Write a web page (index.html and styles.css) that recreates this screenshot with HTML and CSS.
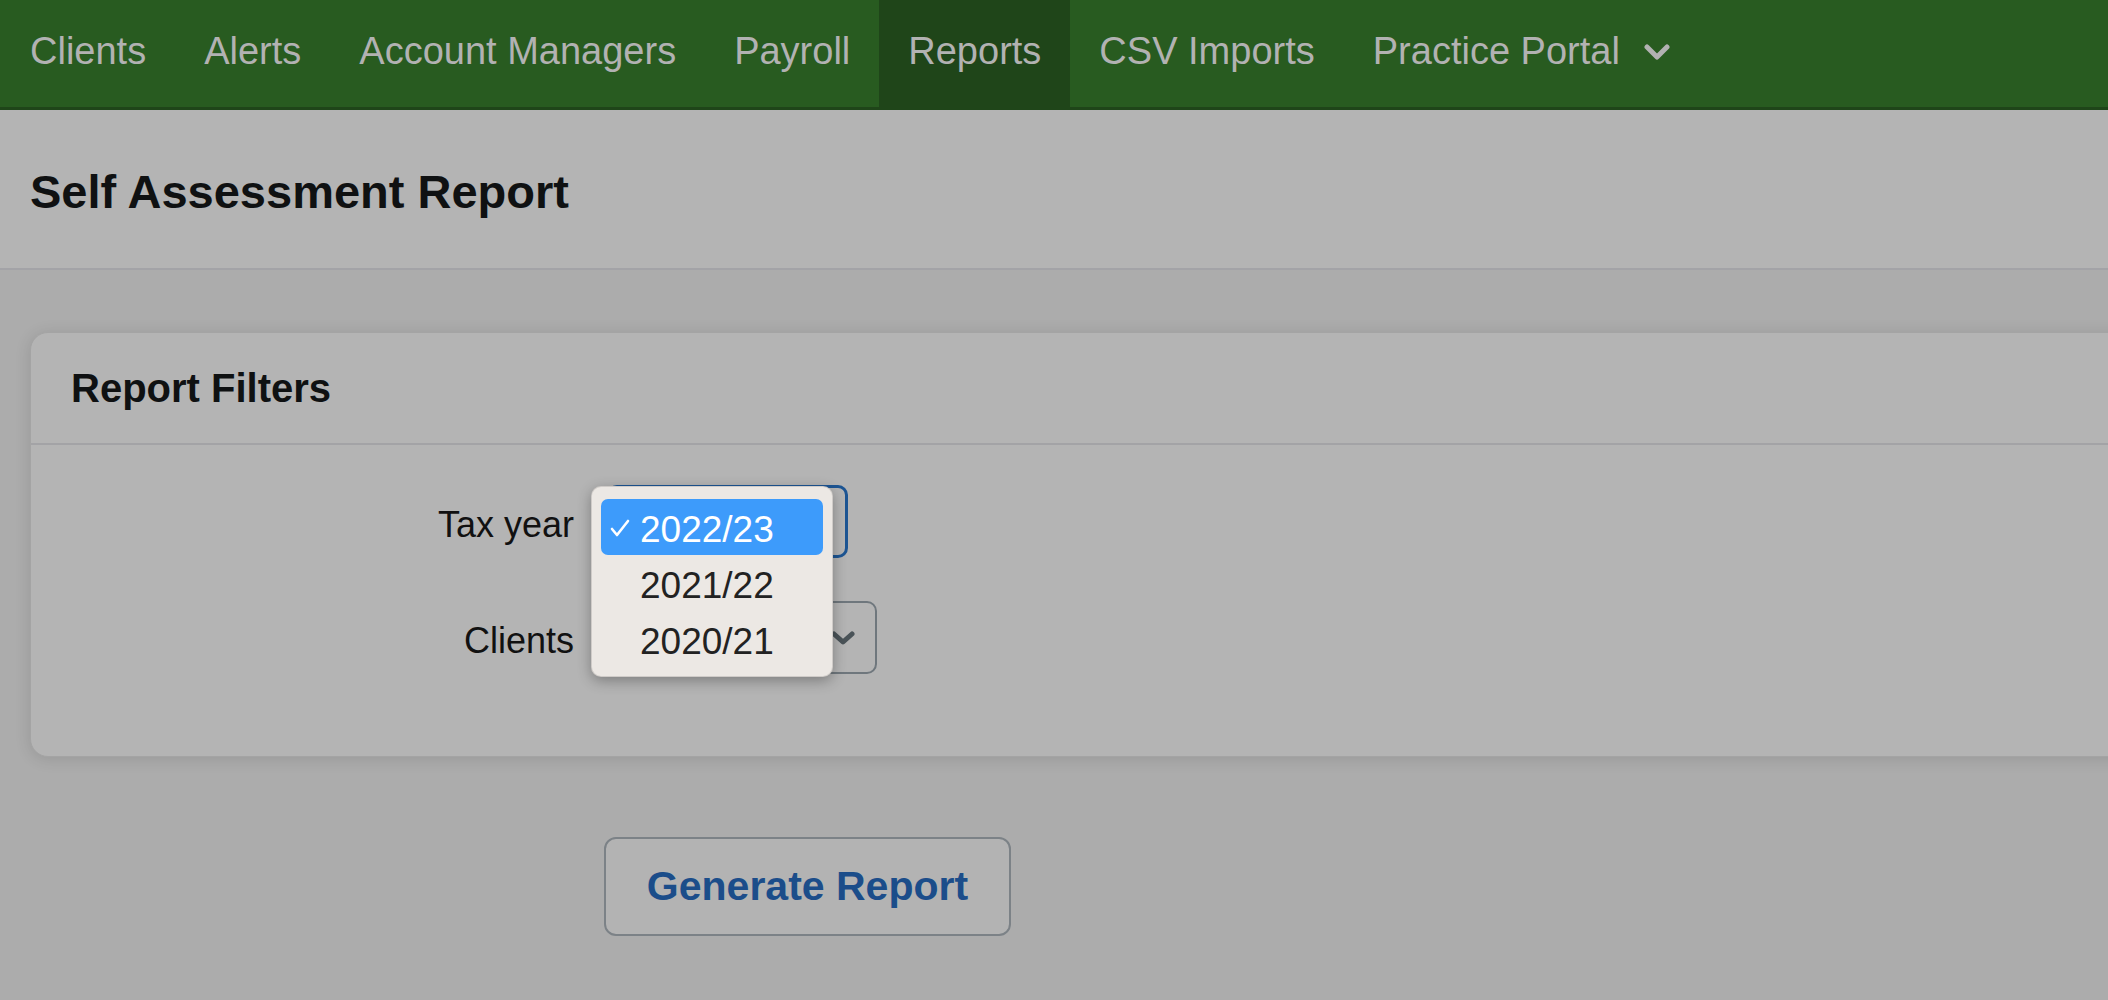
FILE: index.html
```html
<!DOCTYPE html>
<html lang="en">
<head>
  <meta charset="UTF-8">
  <title>Self Assessment Report</title>
  <link rel="stylesheet" href="styles.css">
</head>
<body>
  <nav class="topnav">
    <a class="nav-item">Clients</a>
    <a class="nav-item">Alerts</a>
    <a class="nav-item">Account Managers</a>
    <a class="nav-item">Payroll</a>
    <a class="nav-item active">Reports</a>
    <a class="nav-item">CSV Imports</a>
    <a class="nav-item">Practice Portal
      <svg class="nav-caret" width="26" height="16" viewBox="0 0 26 16">
        <polyline points="3,3 13,13 23,3" fill="none" stroke="currentColor" stroke-width="5" stroke-linecap="round" stroke-linejoin="round"/>
      </svg>
    </a>
  </nav>

  <header class="page-header">
    <h1>Self Assessment Report</h1>
  </header>

  <main class="page-body">
    <section class="card">
      <div class="card-header">
        <h2>Report Filters</h2>
      </div>
      <div class="card-body">
        <div class="form-row">
          <label>Tax year</label>
          <div class="select-wrap">
            <div class="select focused"></div>
            <ul class="popup">
              <li class="selected">
                <svg class="check" width="20" height="18" viewBox="0 0 20 18">
                  <polyline points="2,10 7,16 18,2" fill="none" stroke="#fff" stroke-width="2.6" stroke-linecap="round" stroke-linejoin="round"/>
                </svg>
                2022/23
              </li>
              <li>2021/22</li>
              <li>2020/21</li>
            </ul>
          </div>
        </div>
        <div class="form-row">
          <label>Clients</label>
          <div class="select-wrap">
            <div class="select clients">
              <svg class="sel-caret" width="24" height="14" viewBox="0 0 24 14">
                <polyline points="3,3 12,11 21,3" fill="none" stroke="currentColor" stroke-width="5" stroke-linecap="round" stroke-linejoin="round"/>
              </svg>
            </div>
          </div>
        </div>
      </div>
    </section>

    <button class="generate-btn">Generate Report</button>
  </main>
</body>
</html>
```

FILE: styles.css
```css
* {
  box-sizing: border-box;
}
html, body {
  overflow: hidden;
}
body {
  margin: 0;
  font-family: 'Liberation Sans', Arial, sans-serif;
  background-color: #acacac;
  color: #111;
}

/* top navigation */
.topnav {
  display: flex;
  height: 110px;
  background-color: #285b20;
  border-bottom: 3px solid #1f4519;
}
.nav-item {
  display: flex;
  align-items: center;
  padding: 0 29px 5px;
  font-size: 38px;
  color: #b2b2b2;
  cursor: pointer;
}
.nav-item:first-child {
  padding-left: 30px;
}
.nav-item.active {
  background-color: #1f4519;
}
.nav-caret {
  margin-left: 24px;
  margin-top: 2px;
}

/* page header */
.page-header {
  height: 160px;
  display: flex;
  align-items: center;
  padding: 4px 0 0 30px;
  background-color: #b4b4b4;
  border-bottom: 2px solid #a3a3a7;
}
.page-header h1 {
  margin: 0;
  font-size: 47px;
  font-weight: bold;
  color: #0f1112;
}

.page-body {
  padding: 62px 0 0 30px;
}

/* card */
.card {
  margin-right: -80px;
  background-color: #b4b4b4;
  border: 1px solid #a4a4a4;
  border-radius: 18px;
  box-shadow: 0 2px 16px rgba(0,0,0,0.12);
}
.card-header {
  height: 112px;
  display: flex;
  align-items: center;
  padding-left: 40px;
  border-bottom: 2px solid #a3a3a6;
}
.card-header h2 {
  margin: 0;
  font-size: 40px;
  font-weight: bold;
  color: #0f1112;
}
.card-body {
  padding: 40px 0 82px 0;
  display: flex;
  flex-direction: column;
  gap: 43px;
}
.form-row {
  display: flex;
  align-items: center;
  gap: 33px;
}
.form-row label {
  width: 543px;
  padding-top: 7px;
  text-align: right;
  font-size: 36px;
  color: #111;
}

.select-wrap {
  position: relative;
}
.select {
  height: 73px;
  display: flex;
  align-items: center;
  justify-content: flex-end;
  padding: 0 20px;
  border-radius: 10px;
}
.select.focused {
  width: 241px;
  border: 3px solid #1d5593;
}
.select.clients {
  width: 270px;
  border: 2px solid #6f777d;
}
.sel-caret {
  color: #4a5358;
}

/* open dropdown menu */
.popup {
  position: absolute;
  left: -16px;
  top: 1px;
  width: 242px;
  margin: 0;
  padding: 12px 9px 9px;
  list-style: none;
  background-color: #ece8e4;
  border: 1px solid rgba(0,0,0,0.12);
  border-radius: 10px;
  box-shadow: 0 4px 14px rgba(0,0,0,0.3);
  z-index: 5;
}
.popup li {
  height: 56px;
  display: flex;
  align-items: center;
  padding: 5px 0 0 39px;
  font-size: 37px;
  color: #222;
  border-radius: 7px;
}
.popup li.selected {
  position: relative;
  background-color: #3d9bfb;
  color: #fff;
}
.check {
  position: absolute;
  left: 9px;
  top: 20px;
}

.generate-btn {
  margin: 80px 0 0 574px;
  width: 407px;
  height: 99px;
  background-color: #b3b3b3;
  border: 2px solid #7c8287;
  border-radius: 12px;
  font-family: 'Liberation Sans', Arial, sans-serif;
  font-size: 41px;
  font-weight: bold;
  color: #1b4d8a;
  cursor: pointer;
}
```
